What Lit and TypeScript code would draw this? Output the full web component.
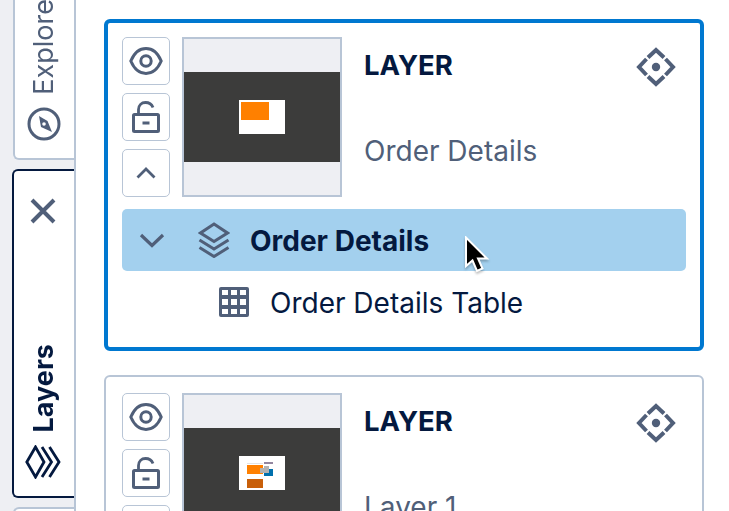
import { LitElement, html, css, svg } from "lit";
import { customElement } from "lit/decorators.js";

const eye = html`<svg width="34" height="30" viewBox="0 0 34 30" fill="none" stroke="#505f79" stroke-width="3"><path d="M1.800 15C5 7.500 10.500 2.600 17 2.600S29 7.500 32.200 15C29 22.500 23.500 27.400 17 27.400S5 22.500 1.800 15Z"/><circle cx="17" cy="15" r="5.200"/></svg>`;
const lock = html`<svg width="28" height="32" viewBox="0 0 28 32" fill="none" stroke="#505f79"><rect x="1.500" y="13.500" width="25" height="17" rx="1" stroke-width="3"/><path d="M6.500 13V8.500C6.500 4.300 9.500 1.500 13.500 1.500C17 1.500 19.800 3.500 21 6.500" stroke-width="2.800"/><rect x="10.500" y="20.500" width="7" height="3" fill="#505f79" stroke="none"/></svg>`;
const chevUp = html`<svg width="20" height="12" viewBox="0 0 20 12" fill="none" stroke="#505f79" stroke-width="2.800"><path d="M1.500 10.500L10 2L18.500 10.500"/></svg>`;
const move = html`<svg width="40" height="40" viewBox="0 0 40 40" fill="#505f79"><circle cx="20" cy="20" r="4.200"/><g fill="none" stroke="#505f79" stroke-width="4"><path d="M12 10.500L20 3L28 10.500"/><path d="M12 29.500L20 37L28 29.500"/><path d="M10.500 12L3 20L10.500 28"/><path d="M29.500 12L37 20L29.500 28"/></g></svg>`;
const thumb2 = svg`<rect x="8" y="7" width="16" height="1" fill="#e4e4e4"/><rect x="25" y="6" width="9" height="2" fill="#93869f"/><rect x="8" y="9" width="16" height="9" fill="#ff8000"/><rect x="25" y="13" width="9" height="7" fill="#0070ad"/><path d="M25 10H30V17H21V12H25Z" fill="#b2b2b2"/><rect x="8" y="23" width="16" height="9" fill="#c85f0a"/>`;

@customElement("app-root")
export class AppRoot extends LitElement {
  static styles = css`
    :host {
      display: flex;
      height: 511px;
      width: 729px;
      overflow: hidden;
      background: #fff;
      font-family: Inter, "Liberation Sans", sans-serif;
      color: #04193f;
    }
    * { box-sizing: border-box; }
    .rail {
      width: 76px;
      flex: none;
      height: 511px;
      background: #eeeff3;
      border-right: 2px solid #b8c5d6;
      display: flex;
      flex-direction: column;
      align-items: flex-end;
      padding-left: 12px;
      gap: 9px;
      overflow: hidden;
    }
    .tab {
      display: flex;
      flex-direction: column;
      align-items: center;
      flex: none;
      background: #fff;
    }
    .vtext {
      writing-mode: vertical-rl;
      transform: rotate(180deg);
      line-height: 28px;
      font-size: 27px;
    }
    .explore {
      width: 61px;
      height: 180px;
      margin-top: -20px;
      border-left: 2px solid #b8c5d6;
      border-bottom: 2px solid #b8c5d6;
      border-bottom-left-radius: 6px;
      justify-content: flex-end;
      padding-bottom: 17px;
      gap: 12px;
      color: #505f79;
      padding-right: 1px;
    }
    .layers {
      width: 64px;
      height: 329px;
      margin-right: -2px;
      border: 2px solid #04193f;
      border-right: none;
      border-radius: 6px 0 0 6px;
      padding-top: 27px;
      padding-bottom: 17px;
      padding-right: 4px;
      gap: 13px;
    }
    .layers .vtext { font-weight: 700; margin-top: auto; margin-left: 2px; }
    .next {
      width: 61px;
      height: 30px;
      border-left: 2px solid #b8c5d6;
      border-top: 2px solid #b8c5d6;
      border-top-left-radius: 6px;
    }
    .main {
      flex: 1;
      padding: 19px 25px 0 28px;
      display: flex;
      flex-direction: column;
      gap: 24px;
      position: relative;
    }
    .card {
      flex: none;
      border: 2px solid #b8c5d6;
      border-radius: 6px;
      padding: 16px;
      background: #fff;
    }
    .card.sel { border: 4px solid #0078d0; padding: 14px; }
    .head { display: flex; gap: 12px; }
    .btns { display: flex; flex-direction: column; gap: 8px; }
    .btn {
      width: 48px;
      height: 48px;
      border: 1px solid #b8c5d6;
      border-radius: 5px;
      display: flex;
      align-items: center;
      justify-content: center;
    }
    .thumb {
      width: 160px;
      height: 160px;
      border: 2px solid #b8c5d6;
      background: #eeeff3;
      display: flex;
      align-items: center;
    }
    .stage {
      flex: 1;
      height: 90px;
      background: #3c3c3b;
      display: flex;
      align-items: center;
      justify-content: center;
    }
    .page { display: block; width: 46px; height: 34px; }
    .info {
      flex: 1;
      display: grid;
      grid-template-columns: 1fr 40px;
      grid-template-rows: 60px 1fr;
      padding-left: 10px;
      padding-right: 10px;
    }
    .title { font-size: 27.500px; font-weight: 700; align-self: center; padding-bottom: 4px; }
    .mv { align-self: center; display: flex; }
    .name { grid-column: 1 / 3; font-size: 28px; color: #505f79; padding-top: 37px; }
    .row {
      height: 62px;
      margin-top: 12px;
      background: #a3d0ee;
      border-radius: 5px;
      display: flex;
      align-items: center;
      padding-left: 17px;
      font-size: 28px;
      font-weight: 700;
    }
    .row .ic { margin-left: 33px; margin-right: 20px; display: flex; }
    .row .lbl, .child .lbl { padding-top: 2px; }
    .child {
      height: 62px;
      display: flex;
      align-items: center;
      padding-left: 97px;
      font-size: 28px;
      gap: 21px;
    }
    .cursor {
      position: absolute;
      left: 388px;
      top: 236px;
      filter: drop-shadow(0 2px 1px rgba(0, 0, 0, 0.25));
    }
    svg { display: block; flex: none; }
  `;

  private card(sel: boolean, name: string, thumb: unknown, tree: unknown) {
    return html`<div class="card ${sel ? "sel" : ""}">
      <div class="head">
        <div class="btns">
          <div class="btn">${eye}</div>
          <div class="btn">${lock}</div>
          <div class="btn">${chevUp}</div>
        </div>
        <div class="thumb"><div class="stage">
          <svg class="page" viewBox="0 0 46 34"><rect width="46" height="34" fill="#fff"/>${thumb}</svg>
        </div></div>
        <div class="info">
          <div class="title">LAYER</div>
          <div class="mv">${move}</div>
          <div class="name">${name}</div>
        </div>
      </div>
      ${tree}
    </div>`;
  }

  render() {
    const tree = html`
      <div class="row">
        <svg width="26" height="15" viewBox="0 0 26 15" fill="none" stroke="#505f79" stroke-width="3.200"><path d="M2 2L13 12.500L24 2"/></svg>
        <span class="ic"><svg width="32" height="36" viewBox="0 0 32 36" fill="none" stroke="#505f79" stroke-width="3"><path d="M16 2L29.500 11L16 19.500L2.500 11Z"/><path d="M1.500 18L16 27L30.500 18"/><path d="M1.500 25.500L16 34.500L30.500 25.500"/></svg></span>
        <span class="lbl">Order Details</span>
      </div>
      <div class="child">
        <svg width="30" height="30" viewBox="0 0 30 30"><rect width="30" height="30" rx="2" fill="#505f79"/><g fill="#fff">
          <rect x="3" y="3" width="6" height="5"/><rect x="12" y="3" width="6" height="5"/><rect x="21" y="3" width="6" height="5"/>
          <rect x="3" y="12" width="6" height="6"/><rect x="12" y="12" width="6" height="6"/><rect x="21" y="12" width="6" height="6"/>
          <rect x="3" y="22" width="6" height="5"/><rect x="12" y="22" width="6" height="5"/><rect x="21" y="22" width="6" height="5"/>
        </g></svg>
        <span class="lbl">Order Details Table</span>
      </div>`;
    return html`
      <div class="rail">
        <div class="tab explore">
          <span class="vtext">Explore</span>
          <svg width="34" height="34" viewBox="0 0 34 34"><circle cx="17" cy="17" r="15" fill="none" stroke="#505f79" stroke-width="3"/><path d="M12 9L20.500 14L25 25L14 20Z" fill="#505f79"/><circle cx="17" cy="17" r="1.800" fill="#fff"/></svg>
        </div>
        <div class="tab layers">
          <svg width="26" height="26" viewBox="0 0 26 26" fill="none" stroke="#505f79" stroke-width="4"><path d="M2 2L24 24M24 2L2 24"/></svg>
          <span class="vtext">Layers</span>
          <svg width="36" height="34" viewBox="0 0 36 34" fill="none" stroke="#04193f" stroke-width="2.800"><path d="M10.500 2L1.800 17L10.500 32L19 17Z"/><path d="M17 2L26.500 17L17 32"/><path d="M24.500 2L34 17L24.500 32"/></svg>
        </div>
        <div class="tab next"></div>
      </div>
      <div class="main">
        ${this.card(true, "Order Details", svg`<rect x="2" y="2" width="28" height="18" fill="#ff8000"/>`, tree)}
        ${this.card(false, "Layer 1", thumb2, "")}
        <svg class="cursor" width="26" height="38" viewBox="0 0 26 38">
          <path d="M2 1.500V30L8.500 24.500L13 35L18.500 32.500L14 22.500H23Z" fill="#000" stroke="#fff" stroke-width="2"/>
        </svg>
      </div>`;
  }
}
